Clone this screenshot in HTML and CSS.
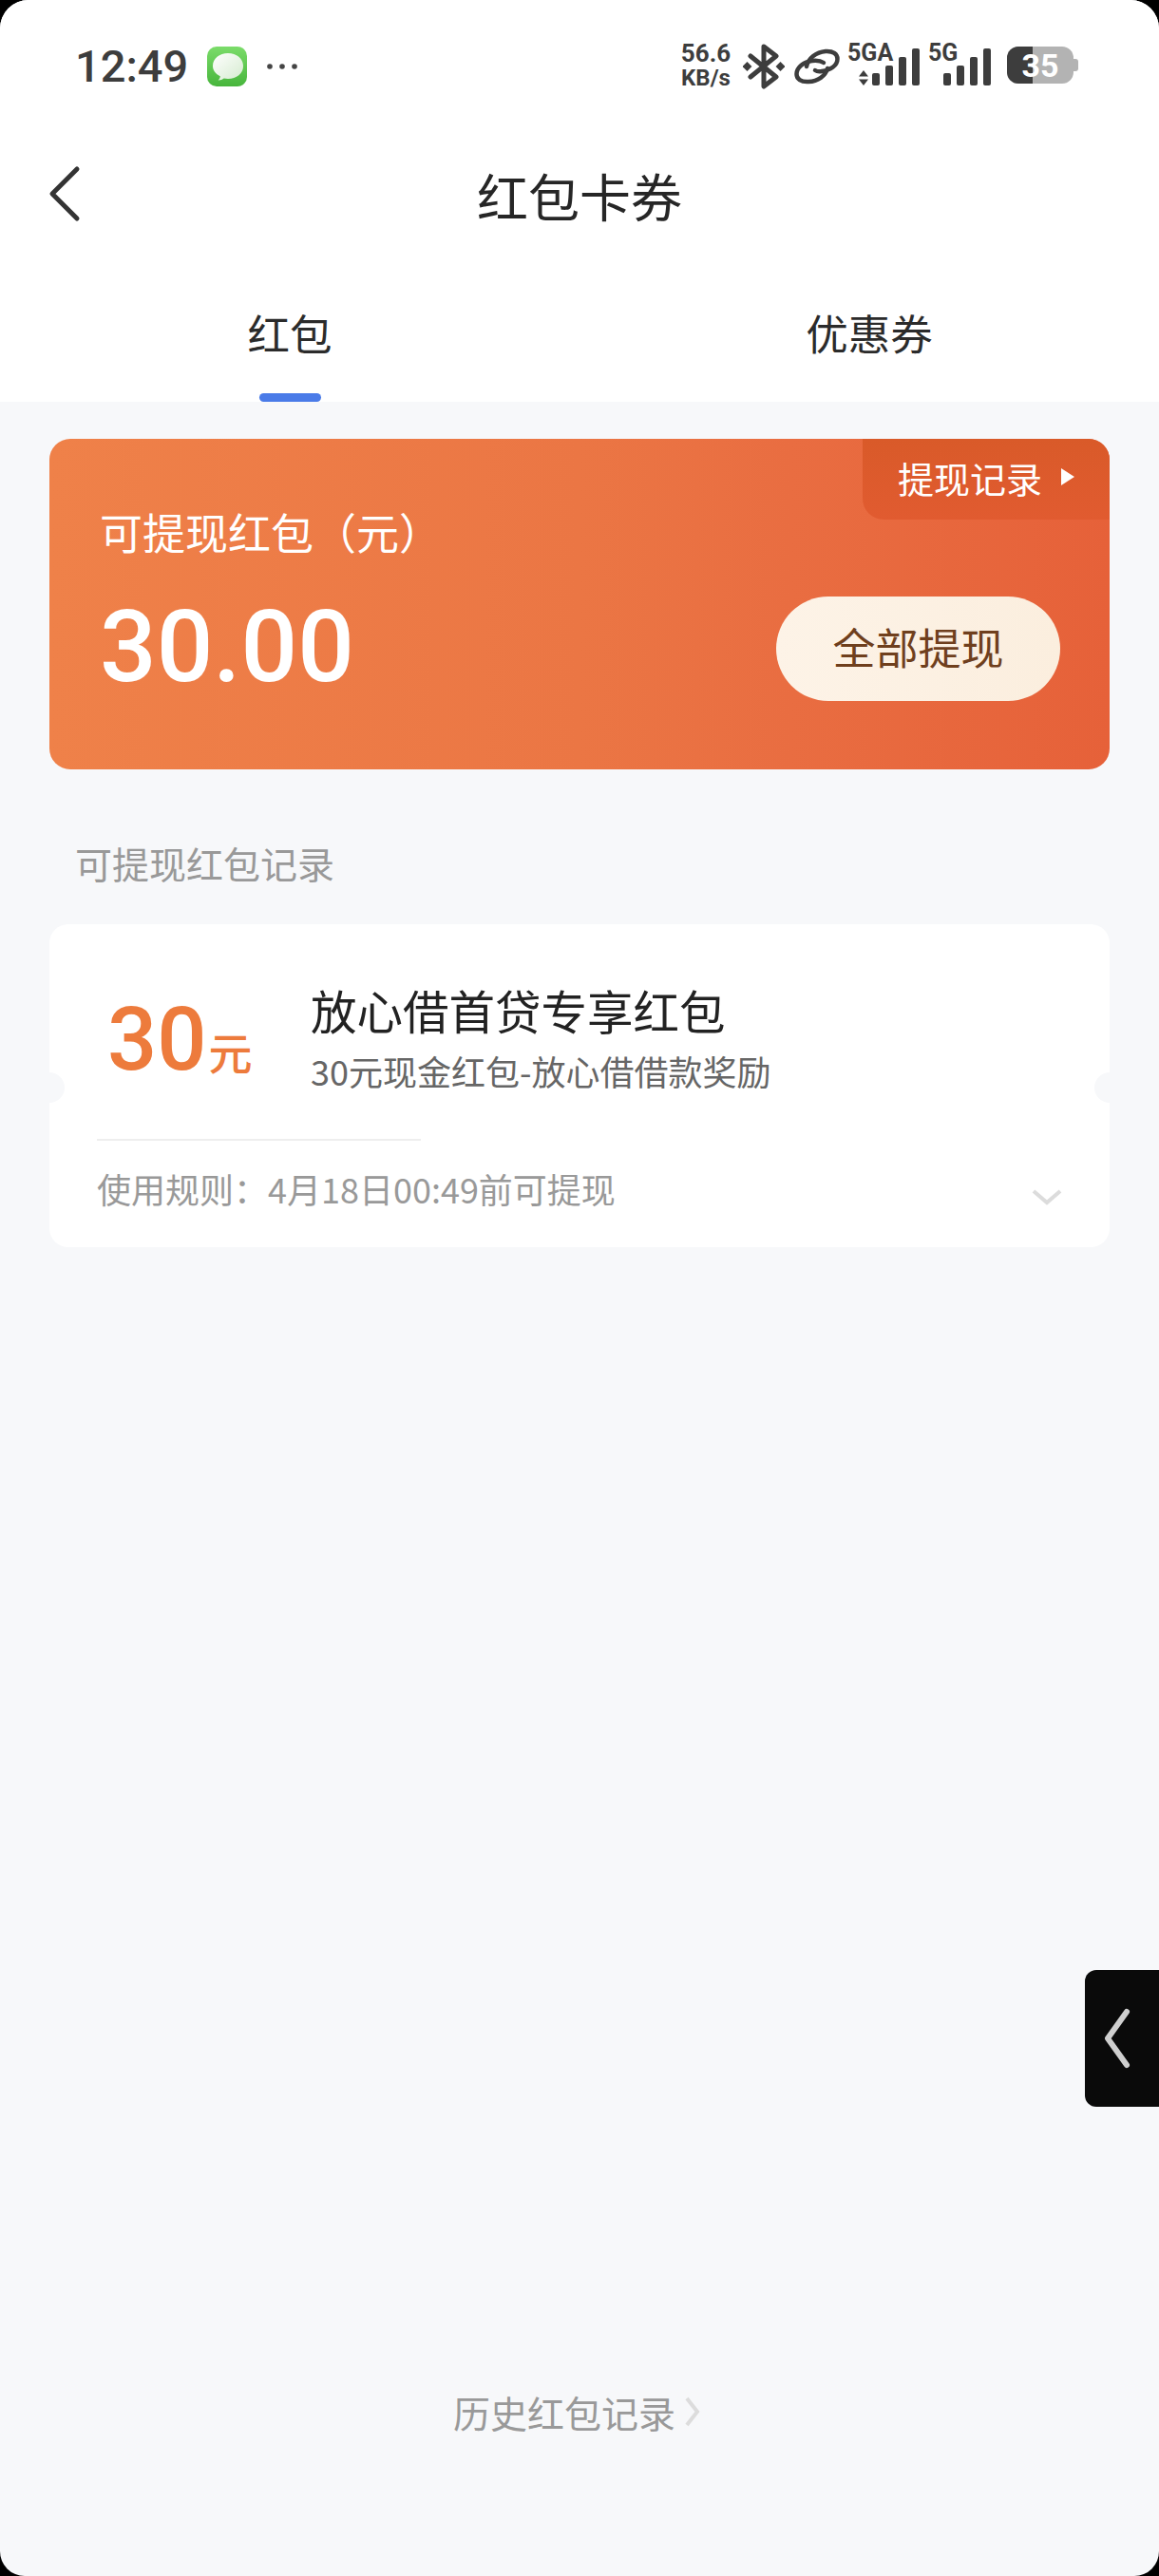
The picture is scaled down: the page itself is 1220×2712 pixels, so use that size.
FILE: index.html
```html
<!DOCTYPE html>
<html lang="zh-CN">
<head>
    <meta charset="UTF-8">
    <meta name="viewport" content="width=device-width, initial-scale=1.0">
    <title>红包卡券</title>
    <link rel="stylesheet" href="styles.css">
</head>
<body>
    <div class="screen">
        <header class="top">
            <div class="status-bar">
                <div class="status-left">
                    <span class="time">12:49</span>
                    <svg class="msg-icon" width="42" height="42" viewBox="0 0 42 42">
                        <defs>
                            <linearGradient id="msgBg" x1="0" y1="0" x2="0" y2="1">
                                <stop offset="0" stop-color="#7bdc6a"/>
                                <stop offset="1" stop-color="#47b53c"/>
                            </linearGradient>
                            <linearGradient id="msgBubble" x1="0" y1="0" x2="1" y2="1">
                                <stop offset="0" stop-color="#ffffff"/>
                                <stop offset="1" stop-color="#d5ebcf"/>
                            </linearGradient>
                        </defs>
                        <rect width="42" height="42" rx="10" fill="url(#msgBg)"/>
                        <path d="M22 7c9 0 16 5.500 16 13.500S31 34 22 34c-1.500 0-3-.2-4.300-.5-1.500 1.300-3.700 2.100-6 2 1.300-1.300 2-2.700 2.100-4.300C9 28.800 6 25 6 20.500 6 12.500 13 7 22 7z" fill="url(#msgBubble)"/>
                    </svg>
                    <svg class="dots" width="34" height="8" viewBox="0 0 34 8">
                        <circle cx="4" cy="4" r="2.800" fill="#444"/>
                        <circle cx="17" cy="4" r="2.800" fill="#444"/>
                        <circle cx="30" cy="4" r="2.800" fill="#444"/>
                    </svg>
                </div>
                <div class="status-right">
                    <div class="speed"><span class="speed-num">56.6</span><span class="speed-unit">KB/s</span></div>
                    <svg class="bt" width="44" height="48" viewBox="0 0 44 48">
                        <path d="M8 13l27 22-13 10V3l13 10L8 35" fill="none" stroke="#3d3d3d" stroke-width="5" stroke-linejoin="round" stroke-linecap="round"/>
                        <rect x="1" y="20.500" width="7" height="7" transform="rotate(45 4.500 24)" fill="#3d3d3d"/>
                        <rect x="36" y="20.500" width="7" height="7" transform="rotate(45 39.500 24)" fill="#3d3d3d"/>
                    </svg>
                    <svg class="link" width="48" height="38" viewBox="0 0 48 38">
                        <path d="M13 19C15 10 23 4 33 3c8-.5 12.500 3 12.500 8 0 7-7.500 12-16.500 13-3 .5-5.500 0-7-1" fill="none" stroke="#3d3d3d" stroke-width="4.500" stroke-linecap="round"/>
                        <path d="M31 15c-3-2-7-2.500-12-2C10 14 2.500 20 2.500 27c0 5 4.500 8.500 12.500 8 10-.5 18-6 20-14" fill="none" stroke="#3d3d3d" stroke-width="4.500" stroke-linecap="round"/>
                    </svg>
                    <div class="signal signal-ga">
                        <span class="net">5GA</span>
                        <svg class="updown" width="12" height="16" viewBox="0 0 12 16">
                            <path d="M6 0l5 6.500H1zM6 16l-5-6.500h10z" fill="#3d3d3d"/>
                        </svg>
                        <div class="bars"><i class="b1"></i><i class="b2"></i><i class="b3"></i><i class="b4"></i></div>
                    </div>
                    <div class="signal signal-g">
                        <span class="net">5G</span>
                        <div class="bars"><i class="b1"></i><i class="b2"></i><i class="b3"></i><i class="b4"></i></div>
                    </div>
                    <div class="battery"><span class="battery-fill"></span><span class="battery-num">35</span><span class="battery-nub"></span></div>
                </div>
            </div>
            <div class="nav">
                <svg class="back" width="34" height="60" viewBox="0 0 34 60">
                    <path d="M30 4L4 30l26 26" fill="none" stroke="#333" stroke-width="5" stroke-linecap="round" stroke-linejoin="round"/>
                </svg>
                <h1>红包卡券</h1>
            </div>
            <div class="tabs">
                <div class="tab active">红包</div>
                <div class="tab">优惠券</div>
            </div>
        </header>

        <main class="content">
            <section class="balance">
                <a class="records-tag">提现记录<span class="tag-arrow"></span></a>
                <div class="balance-left">
                    <div class="balance-label">可提现红包（元）</div>
                    <div class="balance-num">30.00</div>
                </div>
                <button class="withdraw">全部提现</button>
            </section>

            <div class="section-title">可提现红包记录</div>

            <section class="voucher">
                <div class="voucher-top">
                    <div class="amount"><span class="amount-num">30</span><span class="amount-unit">元</span></div>
                    <div class="voucher-info">
                        <div class="voucher-name">放心借首贷专享红包</div>
                        <div class="voucher-desc">30元现金红包-放心借借款奖励</div>
                    </div>
                </div>
                <div class="voucher-line"></div>
                <div class="voucher-rule">
                    <span>使用规则：4月18日00:49前可提现</span>
                    <svg width="32" height="18" viewBox="0 0 32 18">
                        <path d="M2 3l14 12L30 3" fill="none" stroke="#dcdcdc" stroke-width="4"/>
                    </svg>
                </div>
            </section>

            <a class="history">历史红包记录
                <svg width="16" height="32" viewBox="0 0 16 32">
                    <path d="M2 2l11 14L2 30" fill="none" stroke="#dcdcdc" stroke-width="4"/>
                </svg>
            </a>
        </main>

        <div class="side-btn">
            <svg width="28" height="64" viewBox="0 0 28 64">
                <path d="M24 4L4 32l20 28" fill="none" stroke="#cfcfcf" stroke-width="6" stroke-linecap="round" stroke-linejoin="round"/>
            </svg>
        </div>
    </div>
</body>
</html>
```

FILE: styles.css
```css
* {
    box-sizing: border-box;
}
html, body {
    margin: 0;
    padding: 0;
    background: #000;
}
body {
    font-family: "Noto Sans CJK SC", Roboto, sans-serif;
    color: #222;
}
.screen {
    position: relative;
    width: 1220px;
    height: 2712px;
    display: flex;
    flex-direction: column;
    background: #f7f8fa;
    border-radius: 30px 30px 26px 26px;
    overflow: hidden;
}
.top {
    height: 423px;
    background: #fff;
    flex-shrink: 0;
}

/* status bar */
.status-bar {
    height: 140px;
    padding: 46px 90px 0 79px;
    display: flex;
    justify-content: space-between;
    align-items: flex-start;
    color: #3d3d3d;
    font-family: Roboto, sans-serif;
}
.status-left {
    display: flex;
    align-items: center;
    height: 48px;
}
.time {
    font-size: 47px;
    font-weight: 500;
    line-height: 50px;
    width: 139px;
}
.dots {
    margin-left: 20px;
}
.status-right {
    display: flex;
    align-items: flex-start;
    height: 48px;
}
.speed {
    width: 54px;
    display: flex;
    flex-direction: column;
    align-items: center;
    font-weight: 700;
    line-height: 26px;
    margin-top: -3px;
}
.speed-num {
    font-size: 26px;
}
.speed-unit {
    font-size: 24px;
}
.bt {
    margin-left: 12px;
}
.link {
    margin: 5px 0 0 10px;
}
.signal {
    position: relative;
    height: 46px;
}
.signal-ga {
    width: 76px;
    margin-left: 8px;
}
.signal-g {
    width: 66px;
    margin-left: 9px;
}
.net {
    position: absolute;
    left: 0;
    top: -1px;
    font-size: 25px;
    font-weight: 700;
    line-height: 22px;
}
.updown {
    position: absolute;
    left: 11px;
    bottom: 2px;
}
.bars {
    position: absolute;
    right: 0;
    bottom: 2px;
    display: flex;
    align-items: flex-end;
    gap: 6px;
}
.bars i {
    display: block;
    width: 8px;
    background: #3d3d3d;
    border-radius: 2px;
}
.b1 { height: 13px; }
.b2 { height: 21px; }
.b3 { height: 30px; }
.b4 { height: 39px; }
.battery {
    position: relative;
    width: 70px;
    height: 39px;
    margin: 3px 0 0 17px;
    background: #b3b3b3;
    border-radius: 12px;
}
.battery-fill {
    position: absolute;
    left: 0;
    top: 0;
    bottom: 0;
    width: 27px;
    background: #3d3d3d;
    border-radius: 12px 0 0 12px;
}
.battery-num {
    position: absolute;
    left: 0;
    right: 0;
    top: 0;
    text-align: center;
    color: #fff;
    font-size: 34px;
    font-weight: 700;
    line-height: 40px;
}
.battery-nub {
    position: absolute;
    right: -5px;
    top: 13px;
    width: 5px;
    height: 13px;
    background: #b3b3b3;
    border-radius: 0 3px 3px 0;
}

/* nav and tabs */
.nav {
    position: relative;
    height: 134px;
    display: flex;
    align-items: center;
    justify-content: center;
    padding-bottom: 3px;
}
.back {
    position: absolute;
    left: 51px;
    top: 34px;
}
.nav h1 {
    margin: 0;
    font-size: 54px;
    font-weight: 400;
    line-height: 130px;
    color: #262626;
}
.tabs {
    display: flex;
    height: 149px;
}
.tab {
    position: relative;
    flex: 1;
    text-align: center;
    font-size: 44.500px;
    line-height: 151px;
    color: #2b2b2b;
}
.tab.active::after {
    content: "";
    position: absolute;
    left: 50%;
    bottom: 0;
    width: 65px;
    height: 9px;
    margin-left: -32px;
    background: #4a7be8;
    border-radius: 5px;
}

/* main */
.content {
    flex: 1;
    display: flex;
    flex-direction: column;
    padding: 39px 52px 0;
}
.balance {
    position: relative;
    height: 348px;
    padding: 68px 52px 0 53px;
    display: flex;
    justify-content: space-between;
    background: linear-gradient(90deg, #ef8149 0%, #eb7644 50%, #e96d41 70%, #e66139 100%);
    border-radius: 22px;
    color: #fff;
}
.records-tag {
    position: absolute;
    right: 0;
    top: 0;
    width: 260px;
    height: 85px;
    padding: 0 0 5px 37px;
    display: flex;
    align-items: center;
    background: linear-gradient(180deg, #d95a29, #e15b30);
    border-radius: 0 22px 0 22px;
    font-size: 38px;
}
.tag-arrow {
    margin-left: 20px;
    border-left: 14px solid #fff;
    border-top: 9px solid transparent;
    border-bottom: 9px solid transparent;
}
.balance-label {
    font-size: 45px;
    line-height: 60px;
}
.balance-num {
    margin-top: 32px;
    font-family: Roboto, sans-serif;
    font-size: 105px;
    font-weight: 500;
    line-height: 120px;
}
.withdraw {
    align-self: flex-start;
    width: 299px;
    height: 110px;
    margin-top: 98px;
    padding: 0 0 5px;
    border: 0;
    border-radius: 55px;
    background: linear-gradient(90deg, #fdf3e7, #fbeede);
    color: #6f3f1d;
    font-family: inherit;
    font-size: 45px;
}
.section-title {
    margin: 70px 0 0 27px;
    font-size: 39px;
    line-height: 56px;
    color: #999;
}
.voucher {
    position: relative;
    height: 340px;
    margin-top: 37px;
    padding: 0 50px;
    background: #fff;
    border-radius: 20px;
}
.voucher::before,
.voucher::after {
    content: "";
    position: absolute;
    top: 156px;
    width: 32px;
    height: 32px;
    border-radius: 50%;
    background: #f7f8fa;
}
.voucher::before {
    left: -16px;
}
.voucher::after {
    right: -16px;
}
.voucher-top {
    height: 226px;
    display: flex;
    align-items: flex-start;
}
.amount {
    width: 225px;
    margin-top: 68px;
    padding-left: 11px;
    color: #ed7b3c;
    display: flex;
    align-items: baseline;
}
.amount-num {
    font-family: Roboto, sans-serif;
    font-size: 92px;
    font-weight: 500;
    line-height: 108px;
}
.amount-unit {
    margin-left: 2px;
    font-size: 46px;
    font-weight: 500;
}
.voucher-info {
    padding-top: 55px;
}
.voucher-name {
    font-size: 48.500px;
    line-height: 70px;
    color: #222;
}
.voucher-desc {
    margin-top: 3px;
    font-size: 36px;
    line-height: 52px;
    color: #666;
}
.voucher-line {
    width: 341px;
    height: 2px;
    background: #eee;
}
.voucher-rule {
    display: flex;
    justify-content: space-between;
    align-items: center;
    height: 100px;
    font-size: 36px;
    color: #999;
}
.voucher-rule svg {
    margin: 18px 0 0;
}
.history {
    margin-top: auto;
    margin-bottom: 141px;
    padding-right: 6px;
    display: flex;
    align-items: center;
    justify-content: center;
    gap: 10px;
    font-size: 39px;
    line-height: 64px;
    color: #999;
}
.side-btn {
    position: absolute;
    right: 0;
    top: 2074px;
    width: 78px;
    height: 144px;
    display: flex;
    align-items: center;
    justify-content: center;
    padding-right: 10px;
    background: #0a0a0a;
    border-radius: 12px 0 0 12px;
}
```
